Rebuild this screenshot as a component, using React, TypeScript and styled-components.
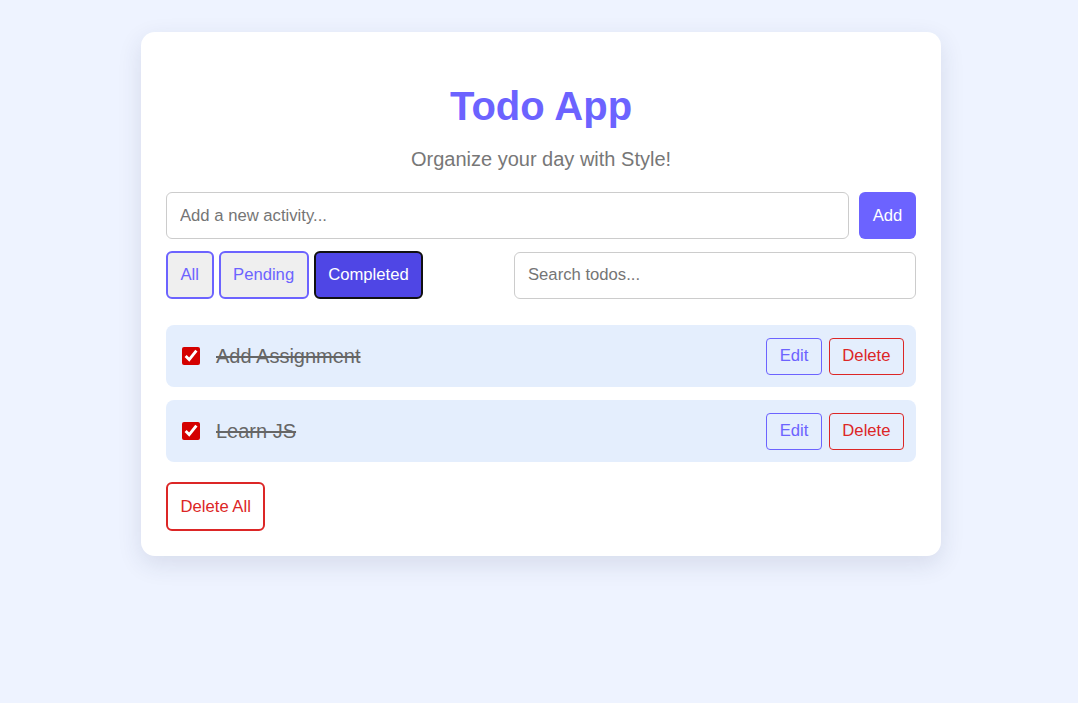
import React, { useState } from 'react';
import styled, { createGlobalStyle } from 'styled-components';

const GlobalStyle = createGlobalStyle`
  body {
    margin: 0;
    background: #eef3ff;
    font-family: "Liberation Sans", Arial, sans-serif;
  }
`;

const Page = styled.div`
  min-height: 100vh;
  display: flex;
  justify-content: center;
  align-items: flex-start;
  padding: 32px 0 0 4px;
  box-sizing: border-box;
`;

const Card = styled.div`
  width: 800px;
  box-sizing: border-box;
  background: #fff;
  border-radius: 14px;
  padding: 25px;
  box-shadow: 0 8px 24px rgba(40, 50, 90, 0.12);
`;

const Title = styled.h1`
  margin: 27px 0 19px;
  text-align: center;
  font-size: 40px;
  font-weight: bold;
  color: #6c63ff;
`;

const Subtitle = styled.p`
  margin: 0 0 21px;
  text-align: center;
  font-size: 20px;
  color: #777;
`;

const Row = styled.div<{ $gap: number }>`
  display: flex;
  align-items: center;
  gap: ${p => p.$gap}px;
`;

const TextInput = styled.input<{ $width?: number }>`
  box-sizing: border-box;
  height: 47px;
  padding: 0 13px;
  border: 1px solid #ccc;
  border-radius: 6px;
  font-size: 16.67px;
  font-family: inherit;
  color: #333;
  ${p => (p.$width ? `width: ${p.$width}px; margin-left: auto;` : 'flex: 1;')}
  &::placeholder { color: #757575; }
  &:focus { outline: none; border-color: #6c63ff; }
`;

const AddButton = styled.button`
  height: 47px;
  width: 57px;
  border: none;
  border-radius: 6px;
  background: #6c63ff;
  color: #fff;
  font-size: 16.67px;
  font-family: inherit;
  cursor: pointer;
`;

const FilterRow = styled(Row)`
  margin-top: 12px;
`;

const FilterButton = styled.button<{ $active: boolean }>`
  box-sizing: border-box;
  height: 48px;
  padding: 0 12.5px;
  border-radius: 6px;
  border: 2px solid ${p => (p.$active ? '#111' : '#6c63ff')};
  background: ${p => (p.$active ? '#4f46e5' : '#efefef')};
  color: ${p => (p.$active ? '#fff' : '#6c63ff')};
  font-size: 16.67px;
  font-family: inherit;
  cursor: pointer;
`;

const List = styled.ul`
  list-style: none;
  margin: 26px 0 20px;
  padding: 0;
  display: flex;
  flex-direction: column;
  gap: 13px;
`;

const Item = styled.li`
  height: 62px;
  display: flex;
  align-items: center;
  padding: 0 12px 0 16px;
  background: #e4eefd;
  border-radius: 8px;
`;

const Check = styled.input`
  width: 18px;
  height: 18px;
  margin: 0 16px 0 0;
  accent-color: #d40000;
`;

const ItemText = styled.span<{ $done: boolean }>`
  flex: 1;
  font-size: 20px;
  color: #666;
  text-decoration: ${p => (p.$done ? 'line-through' : 'none')};
`;

const SmallButton = styled.button<{ $danger?: boolean }>`
  box-sizing: border-box;
  height: 37px;
  padding: 0 12.5px;
  margin-left: 7px;
  border-radius: 4px;
  border: 1px solid ${p => (p.$danger ? '#dc2626' : '#6c63ff')};
  background: transparent;
  color: ${p => (p.$danger ? '#dc2626' : '#6c63ff')};
  font-size: 16.67px;
  font-family: inherit;
  cursor: pointer;
`;

const DeleteAll = styled.button`
  box-sizing: border-box;
  height: 49px;
  padding: 0 12.5px;
  border: 2px solid #dc2626;
  border-radius: 6px;
  background: #fff;
  color: #dc2626;
  font-size: 16.67px;
  font-family: inherit;
  cursor: pointer;
`;

type Filter = 'all' | 'pending' | 'completed';

interface Todo {
  id: number;
  text: string;
  done: boolean;
}

export default function App() {
  const [todos, setTodos] = useState<Todo[]>([
    { id: 1, text: 'Add Assignment', done: true },
    { id: 2, text: 'Learn JS', done: true },
  ]);
  const [filter, setFilter] = useState<Filter>('completed');
  const [draft, setDraft] = useState('');
  const [search, setSearch] = useState('');

  const addTodo = () => {
    if (!draft.trim()) return;
    setTodos([...todos, { id: Date.now(), text: draft.trim(), done: false }]);
    setDraft('');
  };

  const visible = todos.filter(t => {
    if (filter === 'pending' && t.done) return false;
    if (filter === 'completed' && !t.done) return false;
    return t.text.toLowerCase().includes(search.toLowerCase());
  });

  return (
    <Page>
      <GlobalStyle />
      <Card>
        <Title>Todo App</Title>
        <Subtitle>Organize your day with Style!</Subtitle>
        <Row $gap={10}>
          <TextInput
            placeholder="Add a new activity..."
            value={draft}
            onChange={e => setDraft(e.target.value)}
          />
          <AddButton onClick={addTodo}>Add</AddButton>
        </Row>
        <FilterRow $gap={5}>
          <FilterButton $active={filter === 'all'} onClick={() => setFilter('all')}>All</FilterButton>
          <FilterButton $active={filter === 'pending'} onClick={() => setFilter('pending')}>Pending</FilterButton>
          <FilterButton $active={filter === 'completed'} onClick={() => setFilter('completed')}>Completed</FilterButton>
          <TextInput
            $width={402}
            placeholder="Search todos..."
            value={search}
            onChange={e => setSearch(e.target.value)}
          />
        </FilterRow>
        <List>
          {visible.map(t => (
            <Item key={t.id}>
              <Check
                type="checkbox"
                checked={t.done}
                onChange={() => setTodos(todos.map(x => (x.id === t.id ? { ...x, done: !x.done } : x)))}
              />
              <ItemText $done={t.done}>{t.text}</ItemText>
              <SmallButton>Edit</SmallButton>
              <SmallButton $danger onClick={() => setTodos(todos.filter(x => x.id !== t.id))}>Delete</SmallButton>
            </Item>
          ))}
        </List>
        <DeleteAll onClick={() => setTodos([])}>Delete All</DeleteAll>
      </Card>
    </Page>
  );
}
